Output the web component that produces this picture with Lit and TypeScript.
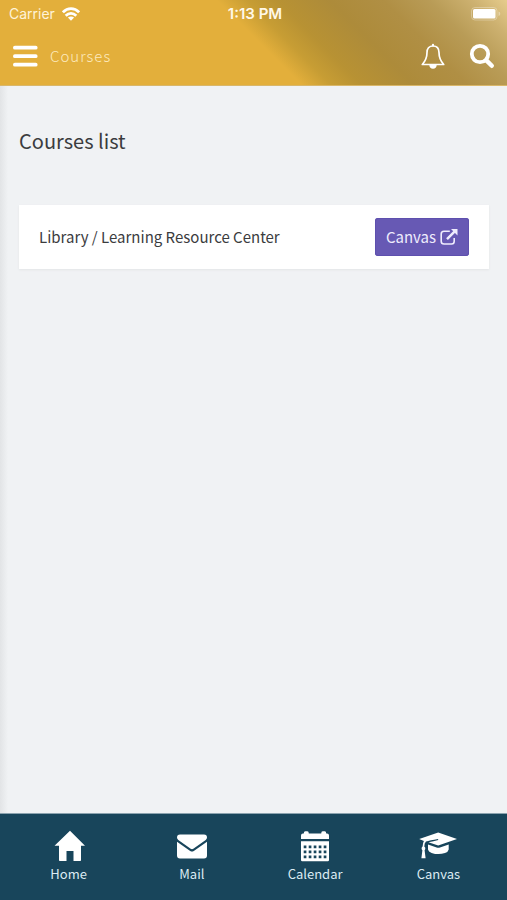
import { LitElement, html, css, svg } from "lit";
import { customElement } from "lit/decorators.js";

const home = svg`<svg viewBox="0 0 32 32" width="32" height="32" fill="currentColor"><path d="M17 .8 32 15.800H28v14.400q0 .8-.8.8h-6.700V21h-7v10H6.800q-.8 0-.8-.8V15.800H1.500z"/></svg>`;

const mail = svg`<svg viewBox="0 0 32 32" width="32" height="32" fill="currentColor"><path d="M4 4.500h24a3 3 0 0 1 3 3q0 1.400-1.300 2.400L17.300 18.800q-1.300.9-2.600 0L2.300 9.900Q1 8.900 1 7.500a3 3 0 0 1 3-3z"/><path d="M1 11.800 14.200 21q1.800 1.200 3.600 0L31 11.800V25.500a3 3 0 0 1-3 3H4a3 3 0 0 1-3-3z"/></svg>`;

const dots = [15.5, 20.5, 25.5].map((y) =>
  [4.7, 9.7, 14.7, 19.7, 24.7].map((x) => `M${x} ${y}v2.700h2.700v-2.700z`).join("")
).join("");
const calendar = svg`<svg viewBox="0 0 32 32" width="32" height="32" fill="currentColor"><path d="M4 3.500h.8q0-2.200 1.500-2.200h2q1.500 0 1.500 2.200h12.400q0-2.200 1.500-2.200h2q1.500 0 1.500 2.200h.8q2 0 2 2V9H2V5.500q0-2 2-2z"/><path fill-rule="evenodd" d="M2 11.200h28V30q0 1.200-1.200 1.200H3.200Q2 31.200 2 30z${dots}"/></svg>`;

const cap = svg`<svg viewBox="0 0 40 32" width="40" height="32" fill="currentColor"><path d="M20.200 2.600 39 9 20.200 15.600 10.500 12.200q5-.9 9.800-2.200l-.3-1.100Q12 10.300 8 11.500q-1.700 1.300-1.700 5 1.200.7 1 2.300-.1.900-.7 1.400l1 8.100H3.400l1-8.100q-.8-.7-.8-1.700 0-1.300 1-2 .1-3.500 1.300-5.500L1.200 9z"/><path d="M10 14.500 18.600 17.400q1.700.5 3.400 0L30.700 14.500V19.500Q30.300 21.800 27 23q-6.700 2.200-13.400-.1Q10.300 21.700 10 19.500z"/></svg>`;

const wifi = svg`<svg viewBox="0 0 18 14" width="18" height="14" fill="none" stroke="currentColor" stroke-width="2.800"><path d="M.9 5.300Q4.400 1.700 9 1.700t8.100 3.600M3.700 8.700Q6.200 6.300 9 6.300t5.300 2.400"/><path fill="currentColor" stroke="none" d="M5.900 10.600Q9 8.200 12.100 10.600L9 13.800z"/></svg>`;

const battery = svg`<svg viewBox="0 0 30 14" width="30" height="14"><rect x=".5" y=".5" width="25.500" height="12.500" rx="3.500" fill="none" stroke="#fff" stroke-opacity=".3"/><rect x="2" y="2" width="22.500" height="9.500" rx="1.500" fill="#fff"/><path d="M27.500 4.500q1.800.6 1.800 2.300t-1.800 2.300z" fill="#fff" fill-opacity=".35"/></svg>`;

const menu = svg`<svg viewBox="0 0 26 24" width="26" height="24" stroke="currentColor" stroke-width="3.800" stroke-linecap="round"><path d="M2.900 3.700h20.800M2.900 12.200h20.800M2.900 20.700h20.800"/></svg>`;

const bell = svg`<svg viewBox="0 0 26 28" width="26" height="28" fill="none" stroke="currentColor" stroke-width="1.700" stroke-linejoin="round"><path d="M13 4C9 4 7 6.800 7 10.500 7 16.500 5 19.500 2.300 22.500H23.700C21 19.500 19 16.500 19 10.500 19 6.800 17 4 13 4z"/><path stroke-linecap="round" stroke-width="2.200" d="M13 2.900v.6"/><path fill="currentColor" stroke="none" d="M9.300 23h7.400q-.3 3.800-3.700 3.800T9.300 23z"/></svg>`;

const search = svg`<svg viewBox="0 0 26 26" width="26" height="26" fill="none" stroke="currentColor" stroke-width="3.800"><circle cx="11" cy="11" r="8.200"/><path stroke-linecap="round" stroke-width="4.400" d="m17.600 17.600 5.200 5.200"/></svg>`;

const external = svg`<svg viewBox="0 0 18 18" width="18" height="18" fill="none" stroke="currentColor" stroke-width="1.600"><path d="M9.800 3.300H4Q1.200 3.300 1.200 6v7.200Q1.200 16 4 16h7.500q2.700 0 2.700-2.800V10"/><path stroke-width="2.500" d="M7 11.200 14.500 3.700"/><path fill="currentColor" stroke="none" d="M11 1h6.500v6.500z"/></svg>`;

const tabs = [
  { label: "Home", icon: home },
  { label: "Mail", icon: mail },
  { label: "Calendar", icon: calendar },
  { label: "Canvas", icon: cap },
];

@customElement("app-root")
export class AppRoot extends LitElement {
  static styles = css`
    :host {
      display: flex;
      flex-direction: column;
      min-height: 100vh;
      background: #f0f2f4;
      color: #3b3c3e;
      font-family: "Noto Sans CJK SC", "Noto Sans", sans-serif;
      font-size: 15px;
      line-height: 24px;
    }
    svg {
      display: block;
      flex: none;
    }
    header {
      color: #fff;
      background: linear-gradient(45deg, #e3af3b 51%, #c79d34 56%, #b89233 61%, #ad8b3a 70%, #b08f44 79%, #b99c57 87%, #cdb170 94%, #e6cc8c 100%);
      border-bottom: 1px solid #d9b76a;
    }
    .status {
      display: grid;
      grid-template-columns: 1fr auto 1fr;
      align-items: center;
      height: 27px;
      padding: 0 6px 0 9px;
      font-family: Inter, "Liberation Sans", sans-serif;
      font-size: 14px;
    }
    .carrier {
      display: flex;
      align-items: center;
      gap: 7px;
      color: #fff3d8;
    }
    .carrier svg {
      color: #fff;
    }
    .time {
      font-size: 15px;
      font-weight: 600;
      color: #fff8e8;
    }
    .battery {
      justify-self: end;
    }
    .bar {
      display: flex;
      align-items: center;
      height: 58px;
      padding: 0 12px;
      box-sizing: border-box;
    }
    button {
      padding: 0;
      border: 0;
      background: none;
      color: inherit;
      cursor: pointer;
    }
    .title {
      flex: 1;
      margin-left: 12px;
      font-weight: 300;
      letter-spacing: 1px;
      color: #fdeabf;
    }
    .actions {
      display: flex;
      align-items: center;
      gap: 23px;
    }
    main {
      flex: 1;
      padding: 39px 18px 40px 19px;
      background: linear-gradient(90deg, #e2e4e6, #f0f2f4 8px);
    }
    h1 {
      margin: 0;
      font-size: 20px;
      line-height: 32px;
      font-weight: 400;
    }
    ul {
      list-style: none;
      margin: 48px 0 0;
      padding: 0;
    }
    li {
      display: flex;
      align-items: center;
      justify-content: space-between;
      gap: 12px;
      padding: 13px 20px;
      background: #fff;
      box-shadow: 0 1px 2px #e3e5e7;
    }
    .launch {
      display: flex;
      align-items: center;
      gap: 4px;
      padding: 7px 11px;
      border-radius: 3px;
      background: #6759b4;
      color: #efecfd;
      text-decoration: none;
      box-shadow: inset 0 0 0 1px #5e50ae;
    }
    nav {
      display: flex;
      height: 86px;
      padding: 0 7px;
      background: #18455b;
      border-top: 1px solid #8ba3af;
      color: #fff;
    }
    .tab {
      flex: 1;
      display: flex;
      flex-direction: column;
      align-items: center;
      gap: 2px;
      padding-top: 16px;
      color: inherit;
      text-decoration: none;
    }
    .tab span {
      font-size: 13px;
      line-height: 20px;
      color: #dcebf3;
    }
  `;

  render() {
    return html`
      <header>
        <div class="status">
          <div class="carrier"><span>Carrier</span>${wifi}</div>
          <div class="time">1:13 PM</div>
          <div class="battery">${battery}</div>
        </div>
        <div class="bar">
          <button aria-label="Menu">${menu}</button>
          <div class="title">Courses</div>
          <div class="actions">
            <button aria-label="Notifications">${bell}</button>
            <button aria-label="Search">${search}</button>
          </div>
        </div>
      </header>
      <main>
        <h1>Courses list</h1>
        <ul>
          <li>
            <span>Library / Learning Resource Center</span>
            <a class="launch" href="#canvas">Canvas${external}</a>
          </li>
        </ul>
      </main>
      <nav>
        ${tabs.map((t) => html`<a class="tab" href="#${t.label.toLowerCase()}">${t.icon}<span>${t.label}</span></a>`)}
      </nav>
    `;
  }
}
